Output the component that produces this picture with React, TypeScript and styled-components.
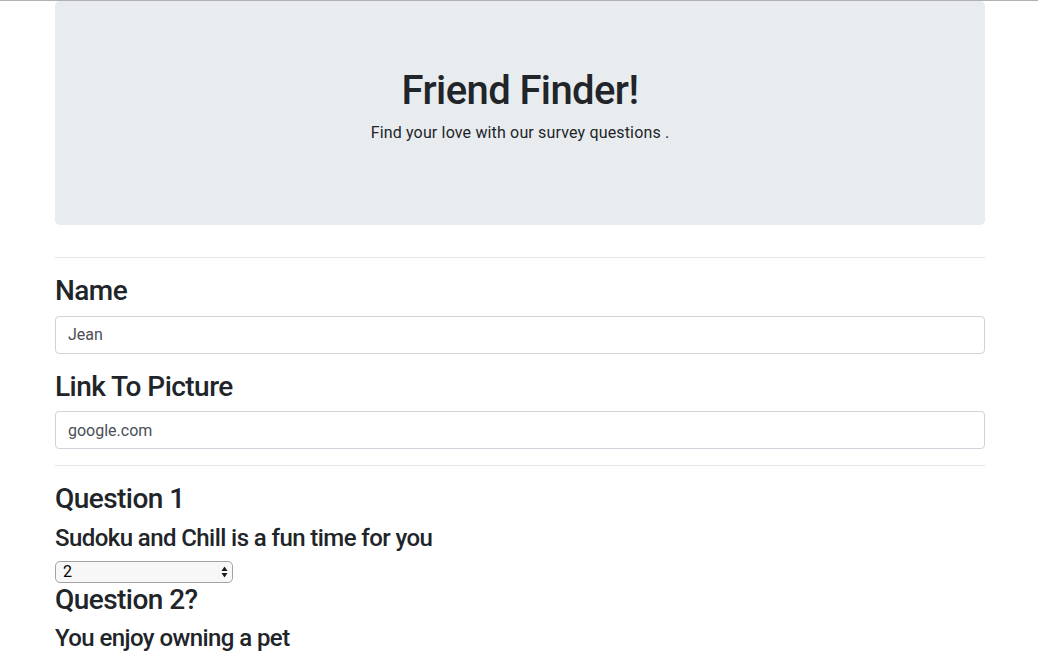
import React from "react";
import styled, { createGlobalStyle } from "styled-components";

const Global = createGlobalStyle`
  html, body { margin: 0; padding: 0; background: #fff; }
  body {
    font-family: Roboto, "Noto Sans", "Liberation Sans", sans-serif;
    font-size: 16px;
    line-height: 1.5;
    color: #212529;
    border-top: 1px solid #b1b0b5;
  }
  * { box-sizing: border-box; }
`;

const Container = styled.div`
  max-width: 960px;
  margin: 0 auto;
  padding: 0 14px 0 16px;
`;

const Jumbotron = styled.header`
  background: #e9ecef;
  border-radius: 4.8px;
  padding: 64px 32px;
  margin-bottom: 32px;
  text-align: center;
`;

const Title = styled.h1`
  margin: 0 0 8px;
  padding-top: 2px;
  height: 48px;
  font-size: 40px;
  font-weight: 500;
  line-height: 48px;
  letter-spacing: -0.6px;
`;

const Lead = styled.p`
  margin: 0 0 16px;
  font-size: 16px;
  line-height: 24px;
  letter-spacing: 0.16px;
`;

const Rule = styled.hr`
  margin: 16px 0;
  border: 0;
  border-top: 1px solid rgba(0, 0, 0, 0.1);
`;

const FormGroup = styled.div`
  margin-bottom: 16px;
`;

const Heading = styled.h3`
  margin: 0 0 8px;
  font-size: 28px;
  font-weight: 500;
  line-height: 33.6px;
  letter-spacing: -0.55px;
`;

const SubHeading = styled.h4`
  margin: 0 0 8px;
  font-size: 24px;
  font-weight: 500;
  line-height: 28.8px;
  letter-spacing: -0.58px;
`;

const Input = styled.input`
  display: block;
  width: 100%;
  height: 38px;
  padding: 6px 12px;
  font-family: inherit;
  font-size: 16px;
  line-height: 1.5;
  color: #495057;
  background: #fff;
  border: 1px solid #ced4da;
  border-radius: 4px;
  outline: none;
`;

const SelectWrap = styled.div`
  position: relative;
  width: 178px;
  height: 22px;
`;

const Select = styled.select`
  appearance: none;
  -webkit-appearance: none;
  display: block;
  width: 100%;
  height: 22px;
  margin: 0;
  padding: 0 20px 0 7px;
  font-family: inherit;
  font-size: 16px;
  line-height: 20px;
  color: #000;
  background: #f7f7f7;
  border: 1px solid #a3a3a3;
  border-radius: 5px;
  outline: none;
`;

const Arrows = styled.svg`
  position: absolute;
  right: 5px;
  top: 5px;
  pointer-events: none;
`;

export default function App() {
  return (
    <>
      <Global />
      <Container>
        <Jumbotron>
          <Title>Friend Finder!</Title>
          <Lead>Find your love with our survey questions .</Lead>
        </Jumbotron>
        <Rule />
        <FormGroup>
          <Heading>Name</Heading>
          <Input defaultValue="Jean" />
        </FormGroup>
        <FormGroup>
          <Heading>Link To Picture</Heading>
          <Input defaultValue="google.com" />
        </FormGroup>
        <Rule />
        <Heading>Question 1</Heading>
        <SubHeading>Sudoku and Chill is a fun time for you</SubHeading>
        <SelectWrap>
          <Select defaultValue="2">
            <option value="1">1</option>
            <option value="2">2</option>
            <option value="3">3</option>
            <option value="4">4</option>
            <option value="5">5</option>
          </Select>
          <Arrows width="7" height="12" viewBox="0 0 7 12">
            <path d="M3.5 0.5 L6.5 5 L0.5 5 Z" fill="#1a1a1a" />
            <path d="M3.5 11.5 L6.5 7 L0.5 7 Z" fill="#1a1a1a" />
          </Arrows>
        </SelectWrap>
        <Heading>Question 2?</Heading>
        <SubHeading>You enjoy owning a pet</SubHeading>
      </Container>
    </>
  );
}
